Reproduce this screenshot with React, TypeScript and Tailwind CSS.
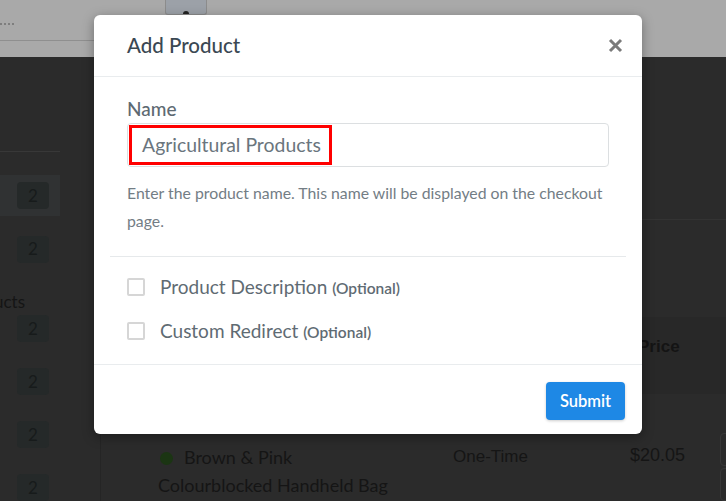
import React from 'react';

const badgeCls =
  'w-[32px] h-[27px] rounded-[4px] bg-[#252929] flex items-center justify-center text-[17px] text-[#171b1b]';

function Badge() {
  return <div className={badgeCls}>2</div>;
}

function CheckRow({ label }: { label: string }) {
  return (
    <label className="h-[44px] flex items-center gap-[15px] cursor-pointer">
      <span className="w-[18px] h-[18px] rounded-[2px] border-2 border-[#d6d6d6] bg-white shrink-0" />
      <span className="text-[19px] text-[#5f6b73]">
        {label} <span className="text-[15.5px] font-semibold">(Optional)</span>
      </span>
    </label>
  );
}

export default function App() {
  return (
    <div className="relative w-[726px] h-[501px] overflow-hidden bg-[#2b2b2b] font-['Lato','Noto_Sans',sans-serif]">
      {/* dimmed page header */}
      <div className="h-[57px] bg-[#a9a9a9] flex items-start">
        <div className="w-[100px] h-[41px] border-b border-[#8f8f8f] flex items-center">
          <div className="flex gap-[2px] mt-[8px]">
            <span className="w-[2px] h-[2px] bg-[#7e7e7e]" />
            <span className="w-[2px] h-[2px] bg-[#7e7e7e]" />
            <span className="w-[2px] h-[2px] bg-[#7e7e7e]" />
            <span className="w-[2px] h-[2px] bg-[#7e7e7e]" />
          </div>
        </div>
        <div className="ml-[65px] w-[42px] h-[15px] bg-[#9ca1a8] border-x border-b border-[#8c8c8c] rounded-b-[3px] flex justify-center items-end">
          <span className="w-[6px] h-[3px] rounded-t-full bg-[#222]" />
        </div>
      </div>

      {/* dimmed page body */}
      <div className="flex h-[444px]">
        <div className="w-[101px] shrink-0 border-r border-[#252525] flex flex-col">
          <div className="h-[95px] w-[60px] border-b border-[#383838]" />
          <div className="mt-[23px] h-[42px] w-[60px] bg-[#303233] flex items-center pl-[17px]">
            <Badge />
          </div>
          <div className="mt-[12px] h-[42px] w-[60px] flex items-center pl-[17px]">
            <Badge />
          </div>
          <div className="mt-[20px] h-[24px] w-[25px] overflow-hidden flex justify-end items-center whitespace-nowrap text-[17px] text-[#151515]">
            Products
          </div>
          <div className="mt-[1px] pl-[17px] flex flex-col gap-[26px]">
            <Badge />
            <Badge />
            <Badge />
            <Badge />
          </div>
        </div>

        <div className="flex-1 flex flex-col">
          <div className="h-[165px] border-b border-[#333333]" />
          <div className="h-[98px]" />
          <div className="h-[78px] bg-[#282828] pt-[20px]">
            <span className="block ml-[537px] leading-[20px] text-[17px] font-bold text-[#141414] font-['Liberation_Sans',sans-serif]">
              Price
            </span>
          </div>
          <div className="flex items-start pt-[39px]">
            <div className="w-[352px] pl-[57px] pt-[10px]">
              <div className="w-[248px] text-[18px] leading-[28px] text-[#151515]">
                <span className="inline-block w-[13px] h-[13px] rounded-full bg-[#1b3513] mr-[11px] ml-[2px] align-[-1px]" />
                Brown &amp; Pink Colourblocked Handheld Bag
              </div>
            </div>
            <div className="w-[177px] pt-[10px] text-[17px] leading-[28px] text-[#151515] font-['Liberation_Sans',sans-serif]">
              One-Time
            </div>
            <div className="w-[90px] pt-[8px] text-[18px] leading-[28px] text-[#151515] font-['Liberation_Sans',sans-serif]">
              $20.05
            </div>
            <div className="flex flex-col gap-[2px]">
              <div className="w-[10px] h-[33px] border border-[#383838] rounded-l-[4px]" />
              <div className="w-[10px] h-[33px] border border-[#383838] rounded-l-[4px]" />
            </div>
          </div>
        </div>
      </div>

      {/* modal */}
      <div className="absolute left-[94px] top-[15px] w-[548px] h-[419px] bg-white rounded-[6px] shadow-[0_3px_12px_rgba(0,0,0,0.35)] flex flex-col">
        <div className="h-[62px] shrink-0 border-b border-[#e9ecee] flex items-center justify-between pl-[33px] pr-[18px]">
          <h2 className="text-[20.5px] font-medium text-[#3b4853]">Add Product</h2>
          <button className="w-[17px] h-[17px] flex items-center justify-center" aria-label="Close">
            <svg width="15" height="15" viewBox="0 0 15 15">
              <path d="M2 2L13 13M13 2L2 13" stroke="#7a7a7a" strokeWidth="3" strokeLinecap="butt" />
            </svg>
          </button>
        </div>

        <div className="px-[16px]">
          <div className="px-[17px] pt-[20px] pb-[21px] border-b border-[#e6e9eb]">
            <div className="h-[24px] leading-[24px] text-[19px] font-medium text-[#5e6a72]">Name</div>
            <div className="mt-[2px] h-[44px] border border-[#dcdfe1] rounded-[4px] flex items-center">
              <div className="ml-[1px] h-[40px] w-[203px] border-[3px] border-[#ff0000] flex items-center pl-[10px] text-[19.4px] text-[#6a757d] whitespace-nowrap">
                Agricultural Products
              </div>
            </div>
            <p className="mt-[12px] text-[15.8px] leading-[28px] text-[#737d85]">
              Enter the product name. This name will be displayed on the checkout page.
            </p>
          </div>
          <div className="px-[17px] pt-[8px] pb-[11px]">
            <CheckRow label="Product Description" />
            <CheckRow label="Custom Redirect" />
          </div>
        </div>

        <div className="flex-1 border-t border-[#e9ecee] flex justify-end items-start pt-[17px] pr-[17px]">
          <button className="h-[38px] w-[79px] rounded-[4px] bg-[#1e88e5] text-white text-[16.5px] font-semibold shadow-[0_1px_3px_rgba(0,0,0,0.2)]">
            Submit
          </button>
        </div>
      </div>
    </div>
  );
}
